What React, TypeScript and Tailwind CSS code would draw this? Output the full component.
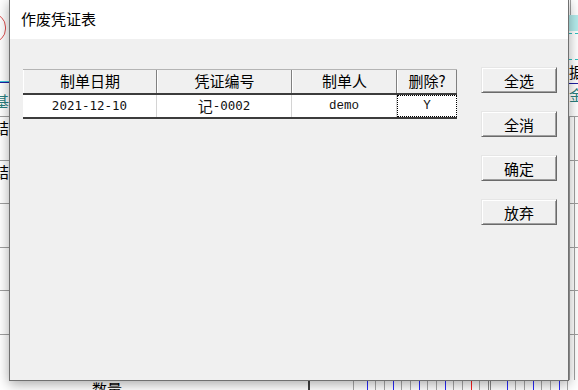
import React from 'react';

const cjk = '"Noto Sans CJK SC", "Noto Sans", sans-serif';

// horizontal ruler ticks peeking out under the dialog: [gap from previous, colour]
const ticks: { gap: number; c: string }[] = [
  { gap: 43, c: 'bg-[#a8a8a8]' },
  { gap: 13, c: 'bg-[#2a2aff]' },
  { gap: 7, c: 'bg-[#a8a8a8]' },
  { gap: 8, c: 'bg-[#a8a8a8]' },
  { gap: 8, c: 'bg-[#2a2aff]' },
  { gap: 7, c: 'bg-[#a8a8a8]' },
  { gap: 8, c: 'bg-[#a8a8a8]' },
  { gap: 8, c: 'bg-[#2a2aff]' },
  { gap: 7, c: 'bg-[#a8a8a8]' },
  { gap: 8, c: 'bg-[#a8a8a8]' },
  { gap: 8, c: 'bg-[#2a2aff]' },
  { gap: 7, c: 'bg-[#a8a8a8]' },
  { gap: 8, c: 'bg-[#a8a8a8]' },
  { gap: 8, c: 'bg-[#ff2020]' },
  { gap: 7, c: 'bg-[#a8a8a8]' },
  { gap: 8, c: 'bg-[#8a8a8a]' },
  { gap: 1, c: 'bg-[#8a8a8a]' },
  { gap: 16, c: 'bg-[#2a2aff]' },
  { gap: 7, c: 'bg-[#a8a8a8]' },
  { gap: 8, c: 'bg-[#a8a8a8]' },
  { gap: 8, c: 'bg-[#2a2aff]' },
  { gap: 7, c: 'bg-[#a8a8a8]' },
  { gap: 8, c: 'bg-[#a8a8a8]' },
  { gap: 8, c: 'bg-[#2a2aff]' },
  { gap: 7, c: 'bg-[#a8a8a8]' },
];

const rows: { h: string; left?: string }[] = [
  { h: 'h-[44px]', left: '结' },
  { h: 'h-[43px]', left: '结' },
  { h: 'h-[44px]' },
  { h: 'h-[43px]' },
  { h: 'h-[44px]' },
  { h: 'h-[46px]' },
];

// a character cut by the dialog edge: only its right part shows
const EdgeChar: React.FC<{ ch: string; color: string }> = ({ ch, color }) => (
  <div className="w-[9px] h-[18px] overflow-hidden flex justify-end">
    <span className={`shrink-0 text-[15px] leading-[18px] ${color}`}>{ch}</span>
  </div>
);

// the ledger window sitting behind the dialog
const BackgroundSheet: React.FC = () => (
  <div className="absolute inset-0 flex flex-col" style={{ fontFamily: cjk }}>
    {/* top band */}
    <div className="h-[116px] flex justify-between">
      <div className="w-[9px] overflow-hidden flex flex-col pt-[13px]">
        <div className="shrink-0 w-[28px] h-[30px] ml-[-22px] rounded-full border border-[#e05050]" />
        <div className="mt-[38px] h-[1px] bg-[#40c8e0]" />
        <div className="h-[1px] bg-[#2020a0]" />
        <div className="mt-[9px]">
          <EdgeChar ch="基" color="text-[#2a8080]" />
        </div>
      </div>
      <div className="w-[9px] overflow-hidden flex flex-col">
        <div className="ml-[1px] w-[1px] h-[15px] bg-[#a0a0a0]" />
        <div className="h-[16px] bg-[#b4ecec]" />
        <div className="mt-[2px] border-t border-dashed border-[#30c0c0]" />
        <div className="mt-[25px] border-t border-dashed border-[#30c0c0]" />
        <div className="mt-[3px] w-[18px] text-[15px] leading-[18px] text-black">据</div>
        <div className="mt-[2px] h-[1px] bg-[#2020a0]" />
        <div className="mt-[2px] w-[18px] text-[15px] leading-[18px] text-[#2a8080]">金</div>
      </div>
    </div>

    {/* grid rows */}
    {rows.map((r, i) => (
      <div key={i} className={`${r.h} border-t border-[#a0a0a0] flex justify-between`}>
        <div className="w-[9px] pt-[2px]">
          {r.left && <EdgeChar ch={r.left} color="text-black" />}
        </div>
        <div className="w-[9px] flex">
          <div className="w-[6px] h-full border-l border-r border-[#a0a0a0]" />
        </div>
      </div>
    ))}

    {/* bottom band under the dialog */}
    <div className="h-[10px] flex items-start">
      <div className="ml-[92px] w-[216px] text-[15px] leading-[18px] text-black">数量</div>
      <div className="w-[2px] h-[10px] bg-[#404040]" />
      {ticks.map((t, i) => (
        <div key={i} className={`shrink-0 w-[1px] h-[10px] ${t.c}`} style={{ marginLeft: t.gap }} />
      ))}
    </div>
  </div>
);

const Button: React.FC<{ label: string }> = ({ label }) => (
  <button
    className="w-[76px] h-[26px] bg-[#f0f0f0] text-[15px] leading-none text-black border-t border-l border-t-[#e6e6e6] border-l-[#e6e6e6] border-r border-b border-r-[#6a6a6a] border-b-[#6a6a6a] shadow-[inset_1px_1px_0_#ffffff,inset_-1px_-1px_0_#a0a0a0] flex items-center justify-center"
    style={{ fontFamily: cjk }}
  >
    {label}
  </button>
);

const headerCell =
  'h-[23px] flex items-center justify-center text-[15px] text-black bg-[#f0f0f0] border-l border-l-white border-r border-r-[#808080]';

const dataCell = 'h-[22px] flex items-center justify-center text-[#111] border-r border-r-[#d4d4d4]';

export default function App() {
  return (
    <div className="relative w-[578px] h-[390px] overflow-hidden bg-white">
      <BackgroundSheet />

      {/* dialog window */}
      <div className="absolute left-[9px] top-[-1px] w-[560px] h-[382px] border border-[#707070] bg-[#f0f0f0] shadow-[0_3px_12px_rgba(0,0,0,0.35)] flex flex-col">
        <div
          className="h-[39px] bg-white flex items-center pl-[11px] text-[15px] text-black"
          style={{ fontFamily: cjk }}
        >
          作废凭证表
        </div>

        <div className="flex-1 flex items-start pl-[13px] pt-[28px] gap-[24px]">
          {/* voucher table */}
          <div className="mt-[2px] w-[434px] border-t border-t-[#b4b4b4]" style={{ fontFamily: cjk }}>
            <div className="grid grid-cols-[134px_135px_105px_60px] border-b-2 border-b-[#3c3c3c]">
              <div className={headerCell}>制单日期</div>
              <div className={headerCell}>凭证编号</div>
              <div className={headerCell}>制单人</div>
              <div className={headerCell}>删除?</div>
            </div>
            <div className="grid grid-cols-[134px_135px_105px_60px] bg-white border-b-2 border-b-[#3c3c3c]">
              <div className={`${dataCell} text-[12.5px]`} style={{ fontFamily: '"DejaVu Sans Mono", monospace' }}>
                2021-12-10
              </div>
              <div className={`${dataCell} text-[15px]`}>
                记
                <span className="text-[12.5px]" style={{ fontFamily: '"DejaVu Sans Mono", monospace' }}>
                  -0002
                </span>
              </div>
              <div className={`${dataCell} text-[12.5px]`} style={{ fontFamily: '"Liberation Mono", monospace' }}>
                demo
              </div>
              <div
                className="h-[22px] flex items-center justify-center text-[12.5px] text-[#111] border border-dotted border-black"
                style={{ fontFamily: '"Liberation Mono", monospace' }}
              >
                Y
              </div>
            </div>
          </div>

          {/* actions */}
          <div className="flex flex-col gap-[18px]">
            <Button label="全选" />
            <Button label="全消" />
            <Button label="确定" />
            <Button label="放弃" />
          </div>
        </div>
      </div>
    </div>
  );
}
